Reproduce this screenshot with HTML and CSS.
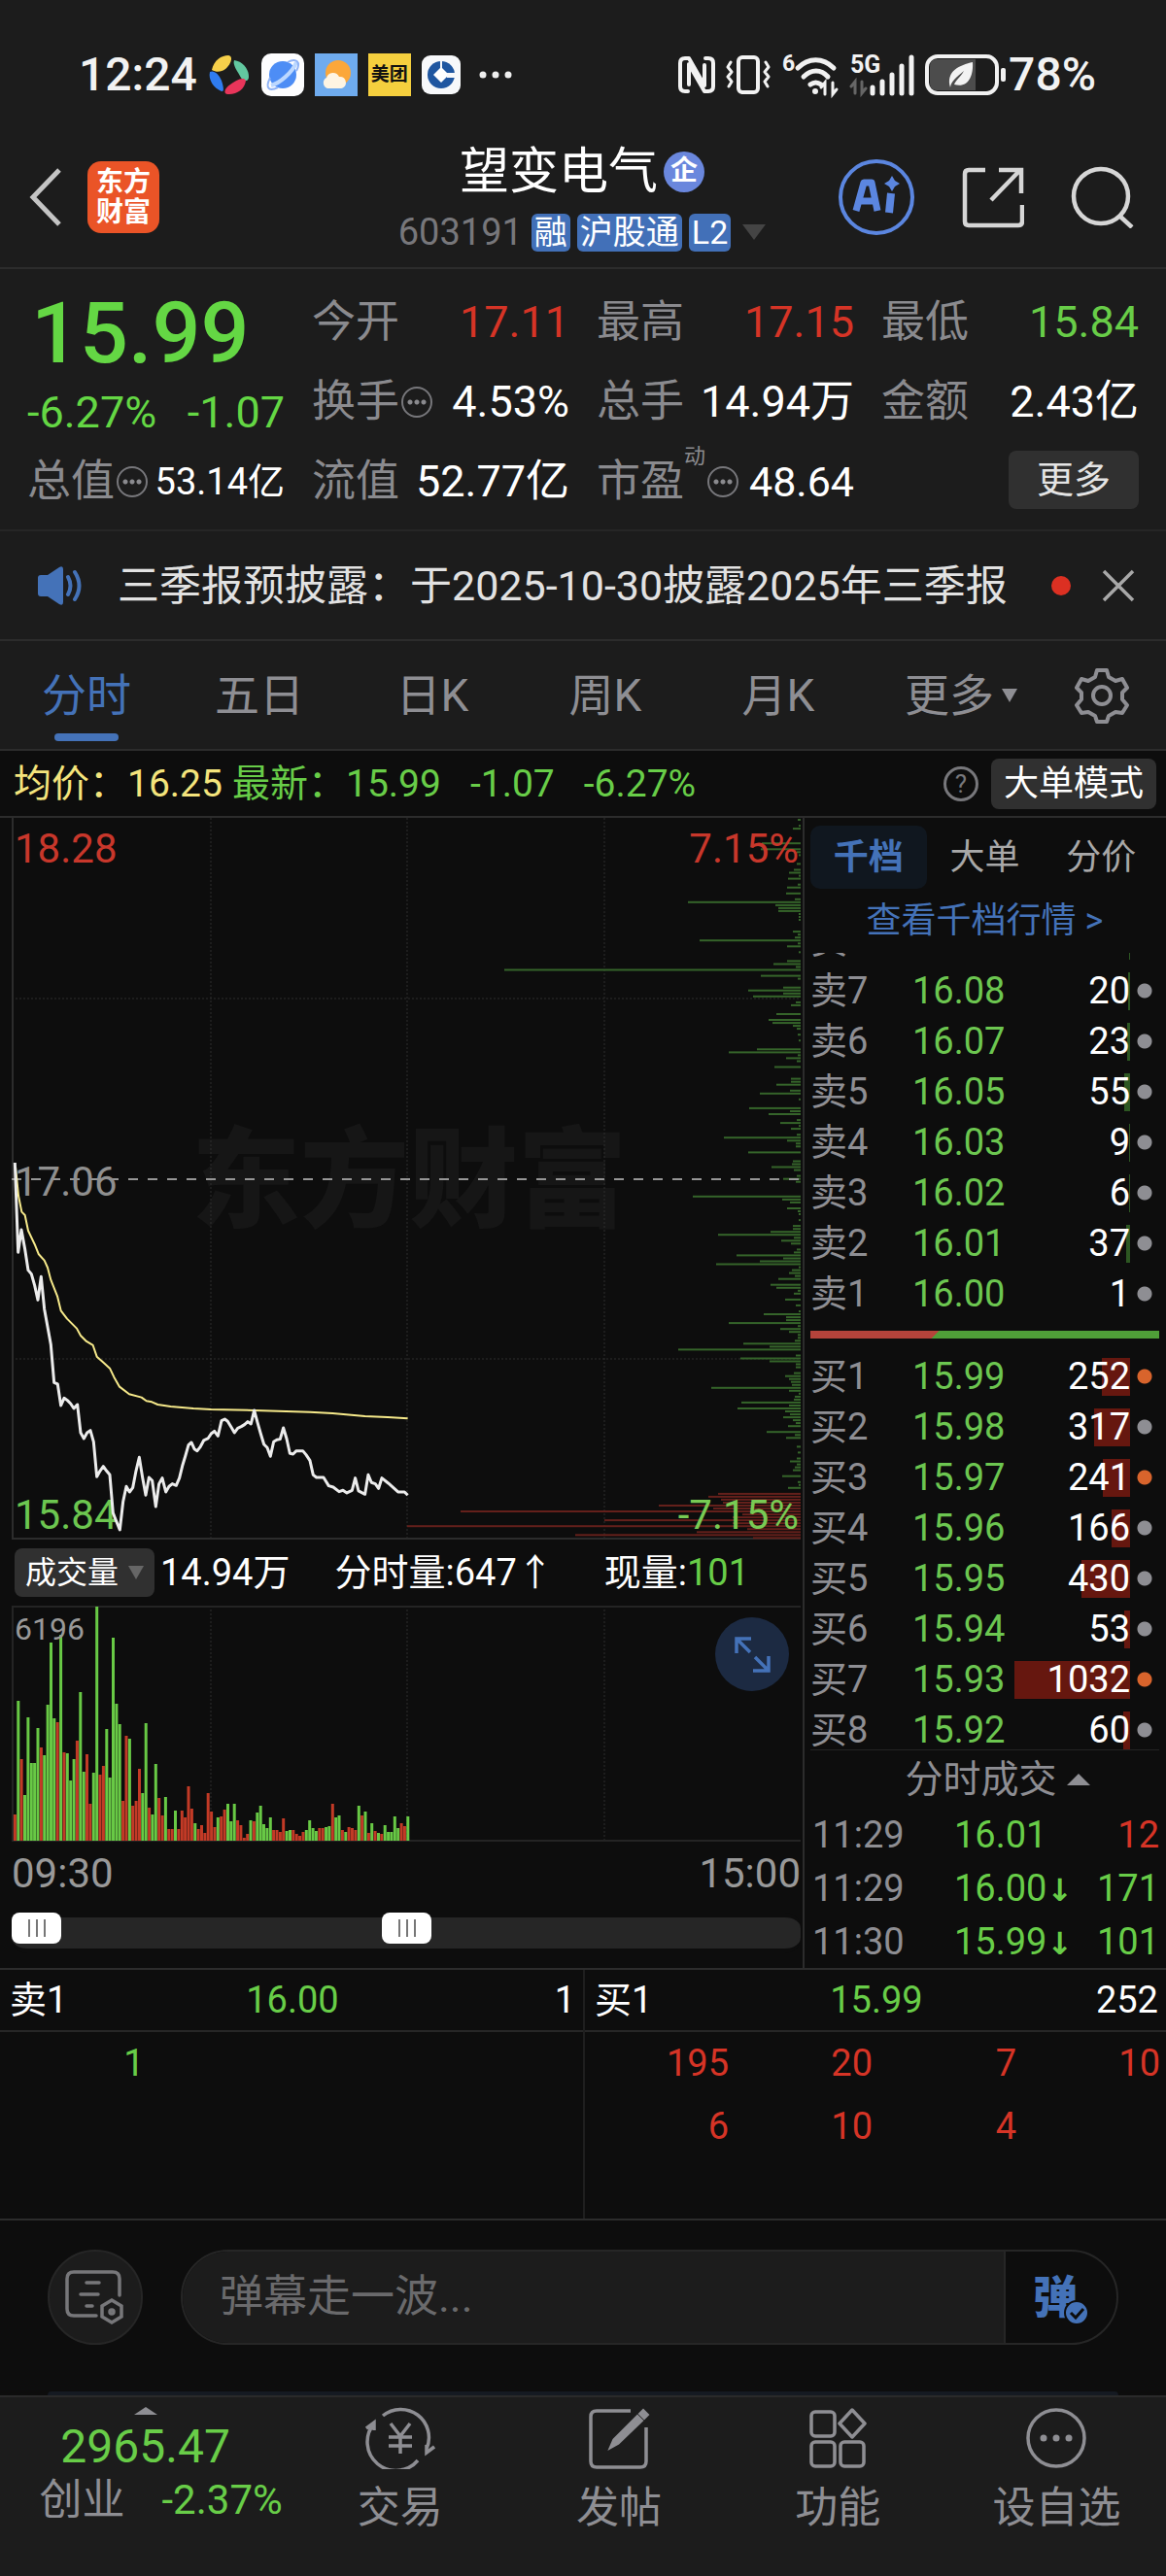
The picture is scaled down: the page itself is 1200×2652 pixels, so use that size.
FILE: index.html
```html
<!DOCTYPE html>
<html lang="zh-CN">
<head>
    <meta charset="UTF-8">
    <meta name="viewport" content="width=device-width, initial-scale=1.0">
    <title>望变电气 603191</title>
    <link rel="stylesheet" href="styles.css">
</head>
<body>
    <!-- status bar -->
    <div class="status">
        <span class="clock">12:24</span>
        <div class="apps">
            <svg width="44" height="44" viewBox="0 0 44 44">
                <path d="M4 17C6 7 14 2 21 2c6 1 2 10-3 14-4 3-9 4-14 1z" fill="#f7d04a"/>
                <path d="M27 7c8 1 15 8 15 17 0 5-5 6-8 1-3-6-9-13-7-18z" fill="#62c8a0"/>
                <path d="M39 28c-1 9-10 15-19 14-5-1-2-7 3-10 5-4 14-9 16-4z" fill="#e8355a"/>
                <path d="M2 19c4-2 9 2 12 9 2 6 3 12 0 11C6 36 0 27 2 19z" fill="#2f7cf0"/>
            </svg>
            <svg width="44" height="44" viewBox="0 0 44 44">
                <rect width="44" height="44" rx="10" fill="#fdfdfe"/>
                <circle cx="22" cy="22" r="14" fill="#4d8df5"/>
                <path d="M10 33C18 31 32 20 36 9" stroke="#bcd8ff" stroke-width="4" fill="none"/>
                <path d="M9 25c-6 12 0 14 8 10M27 9c9-5 14 0 9 9" stroke="#8fb3f6" stroke-width="2" fill="none"/>
            </svg>
            <svg width="44" height="44" viewBox="0 0 44 44">
                <rect width="44" height="44" fill="#6fabee"/>
                <circle cx="24" cy="20" r="13" fill="#fba73a"/>
                <path d="M13 36a6 6 0 0 1-1-11 7 7 0 0 1 13-1 6 6 0 0 1 7 6c0 4-3 6-6 6z" fill="#fff4e2"/>
            </svg>
            <span class="app-mt">美团</span>
            <svg width="40" height="40" viewBox="0 0 40 40">
                <rect width="40" height="40" rx="9" fill="#f7f8fa"/>
                <circle cx="20" cy="20" r="14" fill="#1f56a0"/>
                <path d="M20 12l8 8-8 8-8-8z" fill="#fff"/>
                <path d="M26 18h10v5H26z" fill="#f7f8fa"/><path d="M20 5v8" stroke="#f7f8fa" stroke-width="2"/>
            </svg>
            <svg width="34" height="44" viewBox="0 0 34 44" fill="#eee"><circle cx="4" cy="22" r="3.5"/><circle cx="17" cy="22" r="3.5"/><circle cx="30" cy="22" r="3.5"/></svg>
        </div>
        <div class="signals">
            <svg width="38" height="40" viewBox="0 0 38 40" fill="none" stroke="#f2f2f2" stroke-width="4" stroke-linecap="round" stroke-linejoin="round">
                <path d="M10 37H7q-5 0-5-5V8q0-5 5-5h4l16 28V10M28 3h3q5 0 5 5v24q0 5-5 5h-4L11 9v21"/>
            </svg>
            <svg width="48" height="42" viewBox="0 0 48 42" fill="none" stroke="#f2f2f2" stroke-width="4" stroke-linecap="round" stroke-linejoin="round">
                <rect x="14" y="3" width="20" height="36" rx="4"/>
                <path d="M6 8l-3 5 4 5-4 5 4 5-3 5M42 8l3 5-4 5 4 5-4 5 3 5" stroke-width="3"/>
            </svg>
            <svg width="60" height="50" viewBox="0 0 60 50" fill="none" stroke="#f2f2f2" stroke-width="5" stroke-linecap="round">
                <text x="1" y="21" font-size="23" font-weight="700" fill="#f2f2f2" stroke="none">6</text>
                <path d="M17 18c11-11 26-11 37 0M23 27c8-8 18-8 25 0M30 35c4-3 7-3 11 0"/>
                <circle cx="35" cy="42" r="2" fill="#f2f2f2" stroke-width="2"/>
                <path d="M45 45V33l-4 5M53 33v12l4-5" stroke-width="3"/>
            </svg>
            <svg width="68" height="50" viewBox="0 0 68 50" fill="none" stroke="#f2f2f2" stroke-width="5" stroke-linecap="round">
                <text x="1" y="23" font-size="25" font-weight="700" fill="#f2f2f2" stroke="none">5G</text>
                <path d="M6 44V32l-4 5M13 32v12l4-5" stroke="#666" stroke-width="3"/>
                <path d="M24 44v-6M34 44V32M44 44V25M54 44V16M64 44V7"/>
            </svg>
            <svg width="84" height="44" viewBox="0 0 84 44">
                <rect x="2" y="3" width="72" height="38" rx="11" fill="#1c1c1c" stroke="#f2f2f2" stroke-width="4"/>
                <path d="M12 6h40v32H12c-5 0-7-3-7-8V14c0-5 2-8 7-8z" fill="#4c4c4c"/>
                <path d="M26 35c1-7 7-11 14-17-4 7-8 9-10 14 14 4 20-8 19-23-13 3-28 9-23 26z" fill="#f2f2f2"/>
                <rect x="78" y="15" width="5" height="14" rx="2" fill="#f2f2f2"/>
            </svg>
            <span class="clock">78%</span>
        </div>
    </div>

    <header class="header">
        <div class="header-left">
            <button class="icon-btn" aria-label="返回">
                <svg width="34" height="62" viewBox="0 0 34 62" fill="none" stroke="#c4c4c4" stroke-width="5"><path d="M31 3L4 31l27 28"/></svg>
            </button>
            <a href="#" class="logo">东方<br>财富</a>
        </div>
        <div class="title">
            <h1>望变电气<span class="corp">企</span></h1>
            <div class="sub">
                <span class="code">603191</span><span class="tag">融</span><span class="tag">沪股通</span><span class="tag">L2</span><i class="down"></i>
            </div>
        </div>
        <div class="header-right">
            <button class="icon-btn" aria-label="AI">
                <svg width="80" height="80" viewBox="0 0 80 80">
                    <circle cx="40" cy="40" r="37" fill="none" stroke="#5b86e0" stroke-width="4"/>
                    <path d="M19 54L27 25h8l6 29M24 44h14" fill="none" stroke="#5b86e0" stroke-width="7" stroke-linejoin="round"/>
                    <path d="M55 36l-2 20" stroke="#5b86e0" stroke-width="8"/>
                    <path d="M56 18l3 5 5 3-5 3-3 5-3-5-5-3 5-3z" fill="#5b86e0"/>
                </svg>
            </button>
            <button class="icon-btn" aria-label="分享">
                <svg width="64" height="64" viewBox="0 0 64 64" fill="none" stroke="#d6d6d6" stroke-width="4.5">
                    <path d="M24 4H7q-4 0-4 4v49q0 4 4 4h51q4 0 4-4V40M38 4h23v24M60 4L30 35"/>
                </svg>
            </button>
            <button class="icon-btn" aria-label="搜索">
                <svg width="66" height="64" viewBox="0 0 66 64" fill="none" stroke="#d6d6d6" stroke-width="4.5">
                    <circle cx="31" cy="31" r="28"/><path d="M50 51l13 12"/>
                </svg>
            </button>
        </div>
    </header>

    <section class="quote">
        <div class="now">
            <div class="now-price">15.99</div>
            <div class="now-change"><span>-6.27%</span><span>-1.07</span></div>
        </div>
        <div class="item"><span>今开</span><b class="red">17.11</b></div>
        <div class="item"><span>最高</span><b class="red">17.15</b></div>
        <div class="item"><span>最低</span><b class="green">15.84</b></div>
        <div class="item"><span>换手</span><i class="info"></i><b>4.53%</b></div>
        <div class="item"><span>总手</span><b>14.94万</b></div>
        <div class="item"><span>金额</span><b>2.43亿</b></div>
        <div class="item small"><span>总值</span><i class="info"></i><b>53.14亿</b></div>
        <div class="item"><span>流值</span><b>52.77亿</b></div>
        <div class="item mid"><span>市盈</span><sup>动</sup><i class="info"></i><b>48.64</b></div>
        <div class="item"><button class="more">更多</button></div>
    </section>

    <section class="notice">
        <svg width="50" height="42" viewBox="0 0 50 42">
            <path d="M2 13q0-3 3-3h7L24 2q4-2 4 2v34q0 4-4 2L12 32H5q-3 0-3-3z" fill="#4472b8"/>
            <path d="M33 12q5 9 0 18M40 7q9 14 0 28" fill="none" stroke="#4472b8" stroke-width="4" stroke-linecap="round"/>
        </svg>
        <p>三季报预披露：于2025-10-30披露2025年三季报</p>
        <i class="dot-red"></i>
        <button class="icon-btn" aria-label="关闭">
            <svg width="34" height="34" viewBox="0 0 34 34" stroke="#a8a8a8" stroke-width="3.5"><path d="M2 2l30 30M32 2L2 32"/></svg>
        </button>
    </section>

    <nav class="tabs">
        <button class="on">分时</button>
        <button>五日</button>
        <button>日K</button>
        <button>周K</button>
        <button>月K</button>
        <button class="tab-more">更多<i class="down"></i></button>
        <button aria-label="设置">
            <svg width="56" height="58" viewBox="0 0 56 58" fill="none" stroke="#8e8e93" stroke-width="4" stroke-linejoin="round">
                <path d="M23 3h10l2 7 7 4 7-2 5 9-5 5v7l5 6-5 8-7-1-7 4-2 6H23l-2-6-7-4-7 1-5-8 5-6v-7l-5-5 5-9 7 2 7-4z"/><circle cx="28" cy="29" r="9"/>
            </svg>
        </button>
    </nav>

    <div class="bar-info">
        <span class="yellow">均价：16.25</span>
        <span class="green">最新：15.99</span>
        <span class="green">-1.07</span>
        <span class="green">-6.27%</span>
        <button class="help" aria-label="帮助">?</button>
        <button class="mode">大单模式</button>
    </div>

    <main class="board">
        <div class="charts">
            <svg class="chart" viewBox="0 0 812 743">
                <text x="409" y="413" text-anchor="middle" class="mark">东方财富</text>
                <path d="M205 0V742M407 0V742M610 0V742M0 186H812M0 557H812" class="grid"/>
                <path d="M1 0V742H812" class="frame"/>
                <g id="depth"></g>
                <path d="M0 372H812" class="mid-line"/>
                <text x="3" y="46" fill="#c8372b">18.28</text>
                <text x="3" y="389" fill="#8f8f8f">17.06</text>
                <text x="3" y="732" fill="#6cc650">15.84</text>
                <text x="810" y="46" text-anchor="end" fill="#c8372b">7.15%</text>
                <text x="810" y="732" text-anchor="end" fill="#78cb54">-7.15%</text>
                <g transform="translate(-13 309) scale(.3333)" fill="none" stroke-linejoin="round">
                    <polyline stroke="#f6e98a" stroke-width="6" points="51,150 60,240 70,290 80,300 90,348 110,390 122,420 140,440 150,462 160,500 180,550 191,595 210,620 240,650 252,672 270,690 290,702 302,737 320,753 342,773 355,800 372,830 402,853 440,863 455,874 472,877 490,885 530,891 600,897 655,900 788,903 960,908 1030,912 1130,921 1200,924 1262,928"/>
                    <polyline stroke="#ececec" stroke-width="9" points="49,138 59,415 69,345 80,405 90,470 100,482 110,517 120,562 130,490 140,590 150,645 160,700 170,817 181,822 191,888 201,865 211,872 221,882 231,897 242,885 252,972 262,990 272,972 282,965 292,1000 302,1108 312,1090 322,1076 332,1090 342,1102 352,1220 362,1245 373,1272 383,1185 393,1138 403,1155 413,1142 423,1090 433,1048 443,1110 453,1165 463,1110 473,1120 484,1200 494,1130 504,1112 515,1155 525,1138 535,1130 547,1135 557,1112 566,1075 576,1042 585,1010 594,1002 603,1022 612,1028 622,1015 632,996 645,990 655,975 665,967 676,982 687,935 697,930 706,937 717,955 727,972 737,958 748,953 758,947 768,938 778,945 788,903 798,940 808,975 818,1008 828,1018 838,1045 848,1000 858,994 868,992 878,957 888,990 898,1036 908,1038 918,1028 938,1028 948,1040 960,1058 970,1102 980,1110 1002,1110 1018,1136 1032,1140 1050,1154 1062,1150 1074,1158 1090,1150 1100,1112 1110,1152 1130,1162 1140,1102 1150,1126 1162,1130 1172,1144 1182,1112 1202,1128 1232,1155 1252,1155 1262,1165"/>
                </g>
            </svg>

            <div class="vol-head">
                <button class="pick">成交量<i class="down"></i></button>
                <span>14.94万</span>
                <span class="cur">分时量:647↑</span>
                <span>现量:<em class="green">101</em></span>
            </div>

            <div class="vol-box">
                <svg class="chart" viewBox="0 0 812 243">
                    <path d="M205 0V242M407 0V242M610 0V242" class="grid"/>
                    <path d="M1 242V1H812M0 242H812" class="frame thin"/>
                    <g id="volume"></g>
                    <text x="3" y="35" class="vol-max">6196</text>
                </svg>
                <button class="expand" aria-label="全屏">
                    <svg width="38" height="38" viewBox="0 0 38 38" fill="none" stroke="#4472b8" stroke-width="3.5"><path d="M3 18V3h15M3 3l14 14M20 36h16V21M36 36L22 22"/></svg>
                </button>
            </div>
            <div class="times"><span>09:30</span><span>15:00</span></div>
            <div class="range">
                <input type="range" min="0" max="100" value="0" aria-label="开始时间">
                <input type="range" min="0" max="100" value="50" aria-label="结束时间">
            </div>
        </div>

        <aside class="side">
            <div class="side-tabs">
                <button class="on">千档</button>
                <button>大单</button>
                <button>分价</button>
            </div>
            <a href="#" class="side-link">查看千档行情 &gt;</a>
            <div class="list sell"><table id="sell"></table></div>
            <div class="ratio"></div>
            <div class="list buy"><table id="buy"></table></div>
            <button class="deal-head">分时成交<i class="up"></i></button>
            <table class="deals">
                <tr><td>11:29</td><td>16.01</td><td class="red">12</td></tr>
                <tr><td>11:29</td><td>16.00<i>↓</i></td><td>171</td></tr>
                <tr><td>11:30</td><td>15.99<i>↓</i></td><td>101</td></tr>
            </table>
        </aside>
    </main>

    <section class="queue">
        <div class="queue-col">
            <div class="queue-head"><span>卖1</span><b class="green">16.00</b><span>1</span></div>
            <div class="queue-list green"><span>1</span></div>
        </div>
        <div class="queue-col">
            <div class="queue-head"><span>买1</span><b class="green">15.99</b><span>252</span></div>
            <div class="queue-list red">
                <span>195</span><span>20</span><span>7</span><span>10</span>
                <span>6</span><span>10</span><span>4</span>
            </div>
        </div>
    </section>

    <section class="danmu">
        <button class="danmu-set" aria-label="弹幕设置">
            <svg width="62" height="56" viewBox="0 0 62 56" fill="none" stroke="#77777a" stroke-width="3.5" stroke-linecap="round">
                <path d="M32 47H9q-7 0-7-7V9q0-7 7-7h40q7 0 7 7v17M22 13h13M16 25h18M22 37h6"/>
                <path d="M48 31l10 6v11l-10 6-10-6V37z"/><circle cx="48" cy="43" r="2"/>
            </svg>
        </button>
        <div class="danmu-box">
            <input type="text" placeholder="弹幕走一波..." aria-label="弹幕">
            <button>弹
                <svg width="26" height="26" viewBox="0 0 26 26"><circle cx="13" cy="13" r="12" fill="#4472b8" stroke="#0d0d0d" stroke-width="2"/><path d="M7 13l5 5 8-9" fill="none" stroke="#0d0d0d" stroke-width="3"/></svg>
            </button>
        </div>
    </section>
    <div class="card-top"></div>

    <footer class="nav">
        <a href="#" class="index">
            <i class="up"></i>
            <strong>2965.47</strong>
            <span>创业<em>-2.37%</em></span>
        </a>
        <a href="#">
            <svg width="72" height="64" viewBox="0 0 72 64" fill="none" stroke="#8e8e93" stroke-width="3.5">
                <path d="M18 9A29 29 0 0 1 63 43M54 55A29 29 0 0 1 9 17M1 22l8-6v8M71 41l-8 6v-8"/>
                <path d="M26 17l10 13 10-13M36 30v18M24 31h24M24 40h24"/>
            </svg>
            交易
        </a>
        <a href="#">
            <svg width="64" height="64" viewBox="0 0 64 64" fill="none" stroke="#8e8e93" stroke-width="3.5">
                <path d="M44 4H9q-6 0-6 6v46q0 6 6 6h45q6 0 6-6V21"/><path d="M24 41l3-7L51 10l4 4-24 23z" fill="#8e8e93"/><path d="M54 7l4 4 3-3-4-4z" fill="#8e8e93"/>
            </svg>
            发帖
        </a>
        <a href="#">
            <svg width="60" height="64" viewBox="0 0 60 64" fill="none" stroke="#8e8e93" stroke-width="3.5" stroke-linejoin="round">
                <rect x="3" y="5" width="24" height="25" rx="4"/><rect x="3" y="36" width="24" height="25" rx="4"/><rect x="33" y="36" width="24" height="25" rx="4"/><path d="M45 3l13 14-13 14-13-14z"/>
            </svg>
            功能
        </a>
        <a href="#">
            <svg width="64" height="64" viewBox="0 0 64 64" fill="#8e8e93">
                <circle cx="32" cy="32" r="29" fill="none" stroke="#8e8e93" stroke-width="3.5"/><circle cx="19" cy="32" r="3.5"/><circle cx="32" cy="32" r="3.5"/><circle cx="45" cy="32" r="3.5"/>
            </svg>
            设自选
        </a>
    </footer>

    <script>
    // order book: [name, price, volume, big order]
    let sells = [["卖8","16.09",12],["卖7","16.08",20],["卖6","16.07",23],["卖5","16.05",55],["卖4","16.03",9],["卖3","16.02",6],["卖2","16.01",37],["卖1","16.00",1]]
    let buys = [["买1","15.99",252,1],["买2","15.98",317],["买3","15.97",241,1],["买4","15.96",166],["买5","15.95",430],["买6","15.94",53],["买7","15.93",1032,1],["买8","15.92",60]]

    function fill(id, rows) {
        let html = ""
        for (let i = 0; i < rows.length; i++) {
            let r = rows[i]
            let w = Math.round(r[2] / 1032 * 119)
            html += `<tr><td>${r[0]}</td><td>${r[1]}</td><td><i style="width:${w}px"></i><span>${r[2]}</span></td><td class="${r[3] ? "hot" : ""}"></td></tr>`
        }
        document.getElementById(id).innerHTML = html
    }
    fill("sell", sells)
    fill("buy", buys)

    // depth lines: [level, length]
    let depth = [[0,3],[2,2],[3,8],[8,40],[10,41],[11,4],[12,2],[15,4],[17,7],[18,12],[19,2],[20,13],[22,3],[23,14],[25,15],[27,6],[28,116],[29,26],[30,23],[31,23],[32,2],[33,2],[34,2],[38,8],[39,3],[40,6],[41,104],[42,3],[43,14],[45,2],[48,14],[49,28],[50,5],[51,305],[53,41],[54,3],[57,18],[58,54],[59,18],[60,49],[62,5],[63,10],[66,25],[68,33],[69,29],[70,8],[71,4],[73,3],[75,2],[78,45],[79,74],[80,3],[81,15],[82,4],[84,27],[88,10],[89,10],[90,25],[92,11],[93,42],[95,2],[98,53],[99,11],[100,33],[102,4],[103,21],[104,2],[105,10],[107,4],[108,79],[109,14],[110,5],[111,5],[113,54],[116,8],[117,9],[118,30],[119,7],[121,4],[122,18],[123,5],
    [128,111],[129,19],[130,11],[132,14],[133,3],[134,2],[136,2],[138,8],[139,8],[140,31],[141,85],[142,7],[143,20],[144,10],[146,4],[147,7],[148,66],[149,18],[150,42],[151,87],[152,2],[153,9],[154,12],[155,6],[156,23],[158,31],[159,25],[160,3],[161,7],[163,16],[165,5],[167,2],[168,38],[169,15],[170,15],[171,74],[172,3],[173,21],[174,12],[175,3],[176,3],[177,6],[178,59],[179,32],[180,126],[182,5],[183,62],[184,32],[185,5],[186,5],[188,7],[189,16],[190,12],[191,10],[192,9],[193,92],[194,12],[195,2],[196,6],[197,7],[198,61],[199,12],[200,65],[201,16],[202,11],[203,18],[204,8],[205,5],[206,13],[208,35],[209,6],[210,15],[213,4],[215,3],[217,4],[218,11],[219,4],[220,6],[221,8],[223,19],[225,3],[226,2],[227,13],
    [229,85],[230,95],[231,82],[232,80],[233,146],[234,90],[235,350],[236,60],[237,70],[238,202],[239,70],[240,405],[241,55],[242,107],[243,232],[244,49]]
    let lines = ""
    for (let i = 0; i < depth.length; i++) {
        let y = (depth[i][0] * 3.03 + 1).toFixed(1)
        lines += `<rect x="${812 - depth[i][1]}" y="${y}" width="${depth[i][1]}" height="2" fill="${depth[i][0] < 229 ? "#35642a" : "#64201b"}"/>`
    }
    document.getElementById("depth").innerHTML = lines

    // volume per minute, negative is red
    let vol = [-27,144,-84,47,127,80,80,116,-96,88,140,204,126,-122,212,-91,90,62,84,-103,153,71,-89,-38,70,241,-68,-77,115,65,209,141,120,-41,-108,105,-36,-41,-74,49,121,-34,27,79,-44,-26,45,-12,-12,31,-12,-31,-24,-56,-33,18,-12,-16,-8,-49,-30,-14,24,-25,-32,38,20,38,-21,-16,-3,-7,21,-20,29,36,17,13,24,-11,-11,-9,-23,10,11,-11,-7,-5,-9,11,21,13,10,-13,-13,14,15,-38,24,26,-11,9,-14,-13,-11,36,-26,30,-8,18,-10,8,-7,16,9,9,25,13,-18,-15,25]
    let bars = ""
    for (let i = 0; i < vol.length; i++) {
        let h = Math.abs(vol[i])
        bars += `<rect x="${(1.9 + i * 3.37).toFixed(1)}" y="${242 - h}" width="3" height="${h}" fill="${vol[i] > 0 ? "#68c945" : "#c23a26"}"/>`
    }
    document.getElementById("volume").innerHTML = bars
    </script>
</body>
</html>
```
FILE: styles.css
```css
* {
    box-sizing: border-box;
}

body {
    margin: 0;
    background: #0d0d0d;
    color: #fff;
    font-family: Roboto, "Noto Sans CJK SC", sans-serif;
    font-size: 38px;
    line-height: 52px;
}

button {
    padding: 0;
    border: 0;
    background: none;
    color: inherit;
    font: inherit;
}

a {
    color: inherit;
    text-decoration: none;
}

i, em {
    font-style: normal;
}

b {
    font-weight: 400;
}

svg {
    display: block;
}

table {
    width: 100%;
    border-collapse: collapse;
    table-layout: fixed;
}

td {
    padding: 0;
}

.red { color: #d63426; }
.green { color: #68cd48; }
.yellow { color: #f4e47c; }

.down {
    display: inline-block;
    border: 8px solid transparent;
    border-top: 14px solid #666;
    border-bottom: 0;
}

.up {
    display: inline-block;
    border: 12px solid transparent;
    border-bottom: 12px solid #8e8e93;
    border-top: 0;
}

.icon-btn {
    display: block;
}

/* status bar */
.status {
    display: flex;
    align-items: center;
    padding: 50px 72px 0 81px;
    height: 104px;
    background: #1c1c1c;
    color: #f2f2f2;
}

.clock {
    font-size: 48px;
    font-weight: 500;
}

.apps {
    display: flex;
    align-items: center;
    gap: 11px;
    margin-left: 11px;
}

.apps svg:last-child {
    margin-left: 8px;
}

.app-mt {
    width: 44px;
    height: 44px;
    background: #f5cf3e;
    color: #111;
    font-size: 19px;
    font-weight: 700;
    line-height: 44px;
    text-align: center;
}

.signals {
    display: flex;
    align-items: center;
    gap: 10px;
    margin-left: auto;
}

.signals .clock {
    margin-left: -8px;
}

/* header */
.header {
    display: grid;
    grid-template-columns: 1fr auto 1fr;
    align-items: center;
    padding: 43px 32px 16px 30px;
    background: #1c1c1c;
    border-bottom: 2px solid #2c2c2c;
}

.header-left {
    display: flex;
    align-items: center;
    gap: 26px;
}

.logo {
    width: 74px;
    height: 74px;
    padding-top: 6px;
    border-radius: 14px;
    background: #ea5427;
    font-size: 28px;
    font-weight: 700;
    line-height: 31px;
    text-align: center;
}

.title {
    text-align: center;
}

.title h1 {
    display: flex;
    justify-content: center;
    align-items: center;
    gap: 6px;
    margin: 0 0 12px;
    font-size: 51px;
    font-weight: 400;
    line-height: 60px;
}

.corp {
    width: 42px;
    height: 42px;
    border-radius: 50%;
    background: #6a87dd;
    font-size: 28px;
    font-weight: 700;
    line-height: 40px;
}

.sub {
    display: flex;
    justify-content: center;
    align-items: center;
    gap: 7px;
    line-height: 40px;
}

.code {
    margin-right: 2px;
    color: #77777b;
}

.tag {
    padding: 0 3px;
    border-radius: 6px;
    background: #4270b8;
    font-size: 34px;
    line-height: 39px;
}

.sub .down {
    margin-left: 5px;
    border-width: 16px 12px 0;
    border-top-color: #444;
}

.header-right {
    display: flex;
    justify-content: flex-end;
    align-items: center;
    gap: 48px;
}

/* quote */
.quote {
    display: grid;
    grid-template-columns: repeat(4, 1fr);
    grid-auto-rows: 82px;
    column-gap: 28px;
    padding: 14px 28px 8px;
    background: #1c1c1c;
    border-bottom: 2px solid #262626;
}

.now {
    grid-row: span 2;
    padding-top: 12px;
    color: #64d744;
}

.now-price {
    padding-left: 4px;
    font-size: 88px;
    font-weight: 500;
    line-height: 80px;
}

.now-change {
    display: flex;
    justify-content: space-between;
    font-size: 45px;
    line-height: 84px;
}

.item {
    display: flex;
    align-items: center;
    font-size: 45px;
    white-space: nowrap;
}

.item > span {
    color: #8a8a8e;
}

.item > b {
    margin-left: auto;
}

.item.mid b {
    font-size: 43px;
}

.item.small b {
    font-size: 38px;
}

.item sup {
    align-self: flex-start;
    color: #8a8a8e;
    font-size: 22px;
    line-height: 30px;
}

/* circle with three dots */
.info {
    width: 32px;
    height: 32px;
    margin-left: 2px;
    border: 2px solid #77777b;
    border-radius: 50%;
    background:
        radial-gradient(circle at 7px 14px, #8a8a8e 2px, transparent 3px),
        radial-gradient(circle at 14px 14px, #8a8a8e 2px, transparent 3px),
        radial-gradient(circle at 21px 14px, #8a8a8e 2px, transparent 3px);
}

.more {
    width: 134px;
    height: 60px;
    margin: -4px 0 0 auto;
    border-radius: 8px;
    background: #303030;
    color: #e4e4e4;
    font-size: 38px;
}

/* notice */
.notice {
    display: flex;
    align-items: center;
    height: 113px;
    padding: 0 32px 0 37px;
    background: #1c1c1c;
    border-bottom: 2px solid #2c2c2c;
    color: #e2e2e2;
    font-size: 43px;
}

.notice p {
    flex: 1;
    margin: 0 0 0 34px;
    white-space: nowrap;
}

.dot-red {
    width: 20px;
    height: 20px;
    margin-right: 32px;
    border-radius: 50%;
    background: #dc3022;
}

/* tabs */
.tabs {
    display: grid;
    grid-template-columns: repeat(6, 1fr) 132px;
    height: 113px;
    background: #1c1c1c;
    border-bottom: 2px solid #2c2c2c;
    color: #8e8e93;
    font-size: 46px;
}

.tabs button {
    display: flex;
    justify-content: center;
    align-items: center;
    position: relative;
}

.tabs .on {
    color: #4472b8;
}

.tabs .on::after {
    content: "";
    position: absolute;
    bottom: 8px;
    width: 66px;
    height: 8px;
    border-radius: 4px;
    background: #4472b8;
}

.tabs .tab-more {
    padding-left: 20px;
}

.tabs .down {
    margin-left: 8px;
    border-top-color: #8e8e93;
}

.bar-info {
    display: flex;
    align-items: center;
    height: 69px;
    padding: 0 10px 0 14px;
    border-bottom: 2px solid #2c2c2c;
    font-size: 39px;
}

.bar-info span + span {
    margin-left: 30px;
}

.bar-info .yellow + span {
    margin-left: 10px;
}

.help {
    width: 36px;
    height: 36px;
    margin-left: auto;
    border: 3px solid #77777b;
    border-radius: 50%;
    color: #77777b;
    font-size: 26px;
    line-height: 30px;
}

.mode {
    margin-left: 13px;
    padding: 0 13px;
    border-radius: 8px;
    background: #303030;
    font-size: 36px;
}

/* charts */
.board {
    display: grid;
    grid-template-columns: 826fr 374fr;
    border-bottom: 2px solid #2c2c2c;
}

.charts {
    min-width: 0;
    padding-left: 12px;
    padding-right: 2px;
}

.chart {
    width: 100%;
    font-size: 42px;
}

.grid {
    fill: none;
    stroke: #2e2e2e;
    stroke-dasharray: 2 2;
}

.frame {
    fill: none;
    stroke: #2c2c2c;
    stroke-width: 2;
}

.thin {
    stroke: #242424;
}

.mid-line {
    stroke: #969696;
    stroke-width: 2;
    stroke-dasharray: 10 10;
}

.mark {
    fill: #161616;
    font-size: 112px;
    font-weight: 900;
}

.vol-max {
    fill: #999;
    font-size: 32px;
}

.vol-head {
    display: flex;
    align-items: center;
    height: 68px;
    gap: 6px;
}

.pick {
    display: flex;
    align-items: center;
    gap: 10px;
    height: 50px;
    margin-left: 3px;
    padding: 0 11px;
    border-radius: 8px;
    background: #303030;
    font-size: 32px;
}

.cur {
    margin: 0 46px 0 40px;
}

.vol-box {
    position: relative;
}

.expand {
    display: flex;
    justify-content: center;
    align-items: center;
    position: absolute;
    top: 12px;
    right: 12px;
    width: 76px;
    height: 76px;
    border-radius: 50%;
    background: #1c2a42;
}

.times {
    display: flex;
    justify-content: space-between;
    color: #999;
    font-size: 42px;
    line-height: 66px;
}

/* two handles over one track */
.range {
    position: relative;
    height: 32px;
    margin: 7px 0 20px;
}

.range::before {
    content: "";
    display: block;
    height: 32px;
    border: solid #0d0d0d;
    border-width: 5px 0;
    border-radius: 16px;
    background: #262626;
}

.range input {
    -webkit-appearance: none;
    appearance: none;
    position: absolute;
    top: 0;
    left: 0;
    width: 100%;
    height: 32px;
    margin: 0;
    background: none;
    pointer-events: none;
}

.range input::-webkit-slider-thumb {
    -webkit-appearance: none;
    width: 51px;
    height: 32px;
    border-radius: 8px;
    background:
        linear-gradient(#777, #777) 17px 7px / 2px 18px no-repeat,
        linear-gradient(#777, #777) 25px 7px / 2px 18px no-repeat,
        linear-gradient(#777, #777) 33px 7px / 2px 18px no-repeat,
        #fff;
    pointer-events: auto;
}

/* order book */
.side {
    min-width: 0;
    padding: 8px 7px 0 6px;
    border-left: 2px solid #2c2c2c;
}

.side-tabs {
    display: grid;
    grid-template-columns: repeat(3, 1fr);
    height: 65px;
    color: #a8a8a8;
    font-size: 36px;
}

.side-tabs .on {
    border-radius: 10px;
    background: #10171f;
    color: #4472b8;
    font-weight: 700;
}

.side-link {
    display: block;
    color: #4472b8;
    font-size: 36px;
    line-height: 66px;
    text-align: center;
}

.list {
    display: flex;
    overflow: hidden;
}

.sell {
    align-items: flex-end;
    height: 377px;
}

.buy {
    align-items: flex-start;
    height: 410px;
}

.list tr {
    height: 52px;
}

.list td:nth-child(1) {
    width: 105px;
    color: #8e8e93;
}

.list td:nth-child(2) {
    width: 105px;
    color: #6cc650;
}

.list td:nth-child(3) {
    position: relative;
    text-align: right;
}

.list td:nth-child(3) i {
    position: absolute;
    top: 7px;
    right: 0;
    height: 39px;
    background: #2d5722;
}

.buy td:nth-child(3) i {
    background: #66170f;
}

.list td:nth-child(3) span {
    position: relative;
}

.list td:nth-child(4) {
    width: 30px;
    background: radial-gradient(circle, #8e8e93 7px, transparent 8px);
}

.list td.hot {
    background: radial-gradient(circle, #d8642c 7px, transparent 8px);
}

.ratio {
    height: 8px;
    margin: 12px 0 13px;
    background: linear-gradient(135deg, #b5433b 36%, #4f9e38 36%);
}

.deal-head {
    display: flex;
    justify-content: center;
    align-items: center;
    gap: 10px;
    width: 100%;
    height: 60px;
    padding-left: 26px;
    border-top: 1px solid #242424;
    color: #8e8e93;
    font-size: 39px;
}

.deals td {
    height: 55px;
    color: #68cd48;
    white-space: nowrap;
}

.deals td:first-child {
    width: 148px;
    padding-left: 2px;
    color: #8e8e93;
}

.deals td:last-child {
    width: 90px;
    text-align: right;
}

.deals td.red {
    color: #d63426;
}

.deals i {
    font-family: "DejaVu Sans", sans-serif;
    font-size: 32px;
    font-weight: 700;
    line-height: 38px;
}

/* queue */
.queue {
    display: grid;
    grid-template-columns: 1fr 1fr;
    border-bottom: 2px solid #2c2c2c;
}

.queue-col + .queue-col {
    border-left: 2px solid #1f1f1f;
}

.queue-head {
    display: grid;
    grid-template-columns: 1fr 1fr 1fr;
    padding: 0 8px 0 10px;
    border-bottom: 2px solid #262626;
    line-height: 62px;
}

.queue-head b {
    text-align: center;
}

.queue-head span:last-child {
    text-align: right;
}

.queue-list {
    display: grid;
    grid-template-columns: repeat(4, 1fr);
    min-height: 192px;
    align-content: start;
    padding-right: 6px;
    line-height: 65px;
    text-align: right;
}

/* danmu */
.danmu {
    display: flex;
    gap: 39px;
    padding: 30px 49px 48px;
}

.danmu-set {
    display: flex;
    justify-content: center;
    align-items: center;
    width: 98px;
    height: 98px;
    border: 2px solid #262626;
    border-radius: 50%;
    background: #1c1c1c;
}

.danmu-box {
    display: flex;
    flex: 1;
    height: 98px;
    border: 2px solid #262626;
    border-radius: 49px;
    overflow: hidden;
}

.danmu-box input {
    flex: 1;
    min-width: 0;
    padding: 0 38px;
    border: 0;
    background: #1c1c1c;
    color: #fff;
    font: inherit;
    font-size: 45px;
}

.danmu-box input::placeholder {
    color: #6a6a6c;
}

.danmu-box button {
    position: relative;
    width: 116px;
    padding-right: 12px;
    border-left: 2px solid #262626;
    color: #4472b8;
    font-size: 46px;
    font-weight: 900;
}

.danmu-box svg {
    position: absolute;
    right: 28px;
    bottom: 18px;
}

.card-top {
    height: 4px;
    margin: 0 49px;
    border-radius: 20px 20px 0 0;
    background: #151a22;
}

/* bottom nav */
.nav {
    display: grid;
    grid-template-columns: 299fr 225fr 225fr 225fr 225fr;
    min-height: 187px;
    background: #1c1c1c;
    border-top: 2px solid #2a2a2a;
    color: #8e8e93;
    font-size: 44px;
}

.nav a {
    display: flex;
    flex-direction: column;
    align-items: center;
    gap: 14px;
    padding-top: 10px;
}

.nav .index {
    gap: 0;
}

.index strong {
    color: #68cd48;
    font-size: 48px;
    font-weight: 400;
    line-height: 66px;
}

.index .up {
    border-width: 0 12px 8px;
}

.index span {
    display: flex;
    gap: 38px;
    padding-left: 32px;
    line-height: 44px;
}

.index em {
    color: #68cd48;
    font-size: 42px;
}
```
